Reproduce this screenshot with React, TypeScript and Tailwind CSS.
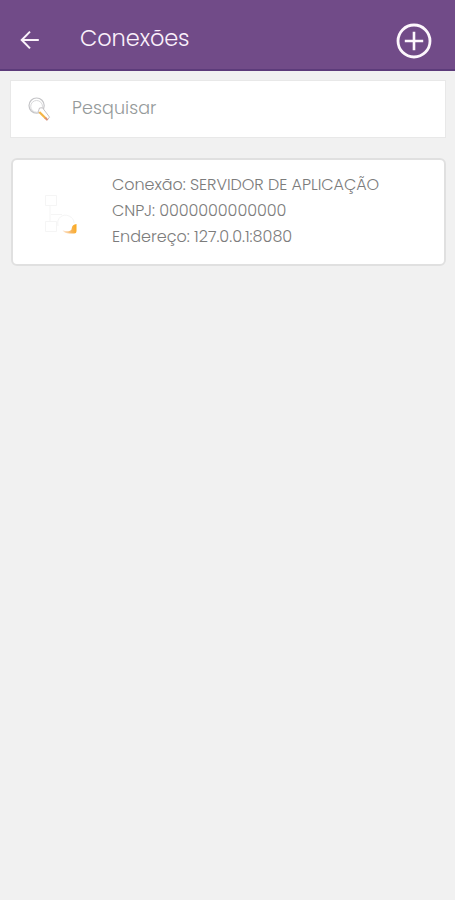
import React, { useState } from "react";

type TypeConexao = {
  id: number;
  nome: string;
  cnpj: string;
  endereco: string;
};

const conexoes: TypeConexao[] = [
  {
    id: 1,
    nome: "SERVIDOR DE APLICAÇÃO",
    cnpj: "0000000000000",
    endereco: "127.0.0.1:8080",
  },
];

const IconVoltar = () => (
  <svg width="20" height="20" viewBox="0 0 20 20" fill="none" stroke="#fbf3fb" strokeWidth="2">
    <path d="M18.8 10H1.7M10 1.6L1.7 10l8.3 8.4" />
  </svg>
);

const IconAdicionar = () => (
  <svg width="36" height="36" viewBox="0 0 36 36" fill="none" stroke="#fdf7fd">
    <circle cx="18" cy="18" r="16" strokeWidth="2.8" />
    <path d="M18 8.8v18.4M8.8 18h18.4" strokeWidth="2.6" />
  </svg>
);

const IconLupa = () => (
  <svg width="24" height="26" viewBox="0 0 24 26" fill="none">
    <circle cx="8.6" cy="9.6" r="7.6" stroke="#c4c4c7" strokeWidth="1.2" />
    <circle cx="8.6" cy="10.4" r="5.9" stroke="#d8d8da" strokeWidth="1" />
    <path d="M11.5 12l3-.2 7 9.3-2.2 3-9-8.6z" fill="#fff" stroke="#c0bcbf" strokeWidth="0.9" />
    <path d="M11.3 16l6.6 6.5" stroke="#f4b545" strokeWidth="2.2" />
    <path d="M17.1 21.7l2.4 2.3" stroke="#dd9176" strokeWidth="2" />
  </svg>
);

const IconServidor = () => (
  <svg width="36" height="42" viewBox="0 0 36 42" fill="none" stroke="#f5f5f5">
    <defs>
      <linearGradient id="canto" x1="18" y1="38" x2="33" y2="34" gradientUnits="userSpaceOnUse">
        <stop stopColor="#fdeee6" />
        <stop offset="0.6" stopColor="#f7b45a" />
        <stop offset="1" stopColor="#fbaa1c" />
      </linearGradient>
    </defs>
    <path d="M1.500 1.500h11v10h-11zM1.500 27.500h11v10h-11zM6 11.500v16M7 20.500h11" />
    <path d="M14 32c-2-8 5-13 11-10 3 1 5 4 5 7" />
    <path
      d="M32.500 30v7.300q0 2.300-2.300 2.300h-4.700q-5 0-7-3.300 4 1.500 7 .6 2.500-.6 2.500-3.600.2-2.500 4.500-3.300z"
      fill="url(#canto)"
      stroke="none"
    />
  </svg>
);

const App = () => {
  let [busca, setBusca] = useState("");

  const lista = conexoes.filter((c) =>
    c.nome.toLowerCase().includes(busca.toLowerCase())
  );

  return (
    <div className="min-h-screen bg-[#f1f1f1] font-['Poppins','Inter',sans-serif] font-light">
      <header className="flex h-[71px] items-center border-b-2 border-[#5c3b7a] bg-[#714b88] pt-3 pr-[23px] pl-5">
        <button aria-label="Voltar" className="-mt-1.5 pt-1">
          <IconVoltar />
        </button>
        <h1 className="-mt-1.5 ml-[40px] flex-1 text-[22.5px] leading-8 tracking-[-0.1px] text-[#fbf0fb]">
          Conexões
        </h1>
        <button aria-label="Adicionar">
          <IconAdicionar />
        </button>
      </header>

      <main className="pt-[9px] pr-[9px] pl-2.5">
        <label className="flex h-[58px] items-center border border-[#e8e8e8] bg-white pl-[17px]">
          <IconLupa />
          <input
            className="-mt-0.5 ml-[20px] flex-1 text-[17.5px] tracking-[0.1px] text-[#959a9a] outline-none placeholder:text-[#959a9a]"
            placeholder="Pesquisar"
            value={busca}
            onChange={(e) => setBusca(e.target.value)}
          />
        </label>

        {lista.map((c) => (
          <div
            key={c.id}
            className="mt-5 ml-px flex h-[108px] rounded-md border-2 border-[#e0e0e0] bg-white pl-[31px]"
          >
            <div className="w-[68px] pt-[34px]">
              <IconServidor />
            </div>
            <div className="flex flex-col items-start pt-[12px] text-[16px] leading-[26px] whitespace-nowrap text-[#7c7c7c]">
              <p className="tracking-[-0.05px]">Conexão: {c.nome}</p>
              <p className="tracking-[-0.08px]">CNPJ: {c.cnpj}</p>
              <p>Endereço: {c.endereco}</p>
            </div>
          </div>
        ))}
      </main>
    </div>
  );
};

export default App;
